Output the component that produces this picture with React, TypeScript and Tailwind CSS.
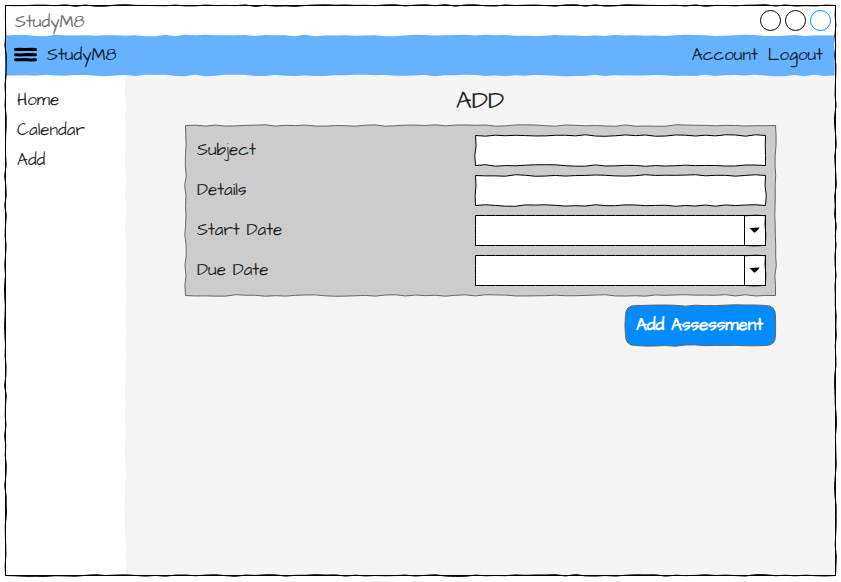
import type { ReactNode } from "react";

/** Small deterministic generator, so that every edge keeps its own wobble. */
function createRandom(seed: number) {
  let state = seed * 7919 + 17;
  return () => {
    state = (state * 16807) % 2147483647;
    return state / 2147483647 - 0.5;
  };
}

type SketchProps = {
  width: number;
  height: number;
  seed: number;
  fill?: string;
  stroke?: string;
  jitter?: number;
  radius?: number;
};

/** Hand-drawn outline: each side is stepped every 10px and nudged sideways. */
function Sketch({ width, height, seed, fill = "none", stroke = "none", jitter = 1.6, radius = 0 }: SketchProps) {
  const random = createRandom(seed);
  const points: string[] = [];
  const side = (x1: number, y1: number, x2: number, y2: number) => {
    const length = Math.abs(x2 - x1) + Math.abs(y2 - y1);
    const steps = Math.max(1, Math.round(length / 10));
    for (let i = 0; i < steps; i++) {
      const t = i / steps;
      const nudge = i === 0 ? 0 : random() * jitter;
      const x = x1 + (x2 - x1) * t + (y1 === y2 ? 0 : nudge);
      const y = y1 + (y2 - y1) * t + (y1 === y2 ? nudge : 0);
      points.push(`L${x.toFixed(2)} ${y.toFixed(2)}`);
    }
    points.push(`L${x2} ${y2}`);
  };
  const r = radius;
  side(r, 0, width - r, 0);
  if (r) points.push(`Q${width} 0 ${width} ${r}`);
  side(width, r, width, height - r);
  if (r) points.push(`Q${width} ${height} ${width - r} ${height}`);
  side(width - r, height, r, height);
  if (r) points.push(`Q0 ${height} 0 ${height - r}`);
  side(0, height - r, 0, r);
  if (r) points.push(`Q0 0 ${r} 0`);
  return (
    <svg
      className="pointer-events-none absolute top-0 left-0 -z-10 overflow-visible"
      width={width + 1}
      height={height + 1}
      aria-hidden="true"
    >
      <path transform="translate(.5 .5)" d={`M${r} 0${points.join("")}Z`} fill={fill} stroke={stroke} />
    </svg>
  );
}

function Row({ label, children }: { label: string; children: ReactNode }) {
  return (
    <div className="flex h-[30px] items-center justify-between">
      <span>{label}</span>
      {children}
    </div>
  );
}

function TextField({ seed }: { seed: number }) {
  return (
    <div className="relative isolate h-[30px] w-[291px]">
      <Sketch width={290} height={30} seed={seed} fill="#fff" stroke="#000" />
    </div>
  );
}

function DateField({ seed }: { seed: number }) {
  return (
    <div className="relative isolate flex h-[30px] w-[291px] justify-end">
      <Sketch width={290} height={30} seed={seed} fill="#fff" stroke="#000" jitter={0} />
      <svg width="22" height="31" className="shrink-0 overflow-visible" aria-hidden="true">
        <path d="M.5.5V30.5M.8.8L12 .2L21.5.7L21 9L21.8 19L21.4 30.5L10 30.9L.5 30.5" fill="none" stroke="#000" />
        <path d="M5.5 12.9L15.8 12.5L13.4 15.2L10.8 17.8L8.8 16.3Z" />
      </svg>
    </div>
  );
}

export default function App() {
  return (
    <div className="h-[582px] w-[841px] bg-white p-[5px] font-['Architects_Daughter',Inter,sans-serif] text-[17px] leading-5 text-black/85">
      <div className="relative isolate flex h-[571px] w-[831px] flex-col">
        <header className="flex h-[30px] shrink-0 items-center justify-between pr-1 pl-[10px] text-[#707070]">
          <span className="pt-[4px]">StudyM8</span>
          <svg width="72" height="22" className="overflow-visible" fill="none" aria-hidden="true">
            <circle cx="10.5" cy="11.5" r="10" stroke="#000" />
            <circle cx="35.5" cy="11.5" r="10" stroke="#000" />
            <circle cx="60.5" cy="11.5" r="10" stroke="#008cff" />
          </svg>
        </header>

        <nav className="relative isolate z-10 flex h-10 shrink-0 items-center pr-[13px] pl-[9px]">
          <Sketch width={829} height={40} seed={3} fill="#66b2ff" />
          <svg width="24" height="16" className="mr-[9px] shrink-0" aria-hidden="true">
            <path
              d="M1.5 2.6L6 2.3L12 2.6L17 2.3L21.5 2.6M1.5 7.7L7 7.9L13 7.5L21.5 7.7M1.5 12.7L6 12.8L11 12.5L17 12.9L21.5 12.7"
              fill="none"
              stroke="#000"
              strokeWidth="3"
              strokeLinecap="round"
            />
          </svg>
          <span>StudyM8</span>
          <span className="ml-auto">Account</span>
          <span className="ml-[10px]">Logout</span>
        </nav>

        <div className="flex min-h-0 flex-1">
          <aside className="flex w-[120px] shrink-0 flex-col gap-[10px] pt-[15px] pl-3">
            <span>Home</span>
            <span>Calendar</span>
            <span>Add</span>
          </aside>

          <main className="relative isolate flex flex-1 flex-col items-center pt-[10px]">
            <Sketch width={709} height={500} seed={8} fill="#f5f5f5" />
            <h1 className="h-[40px] pt-px pr-px text-[25px] leading-[30px]">ADD</h1>
            <div className="flex w-[591px] flex-col items-end">
              <section className="relative isolate flex h-[171px] w-[591px] flex-col gap-[10px] pt-[10px] pr-[10px] pl-3">
                <Sketch width={590} height={170} seed={21} fill="#ccc" stroke="#666" />
                <Row label="Subject">
                  <TextField seed={31} />
                </Row>
                <Row label="Details">
                  <TextField seed={44} />
                </Row>
                <Row label="Start Date">
                  <DateField seed={52} />
                </Row>
                <Row label="Due Date">
                  <DateField seed={63} />
                </Row>
              </section>
              <button className="relative isolate mt-[9px] h-[41px] w-[151px] pr-[2px] pb-[2px] text-[17px] font-bold whitespace-nowrap text-white">
                <Sketch width={150} height={40} seed={71} fill="#008cff" stroke="#666" radius={10} />
                Add Assessment
              </button>
            </div>
          </main>
        </div>

        <div className="pointer-events-none absolute inset-0 border border-black" />
        <div className="pointer-events-none absolute inset-0 z-20 isolate">
          <Sketch width={830} height={570} seed={90} stroke="#000" jitter={2} />
        </div>
      </div>
    </div>
  );
}
